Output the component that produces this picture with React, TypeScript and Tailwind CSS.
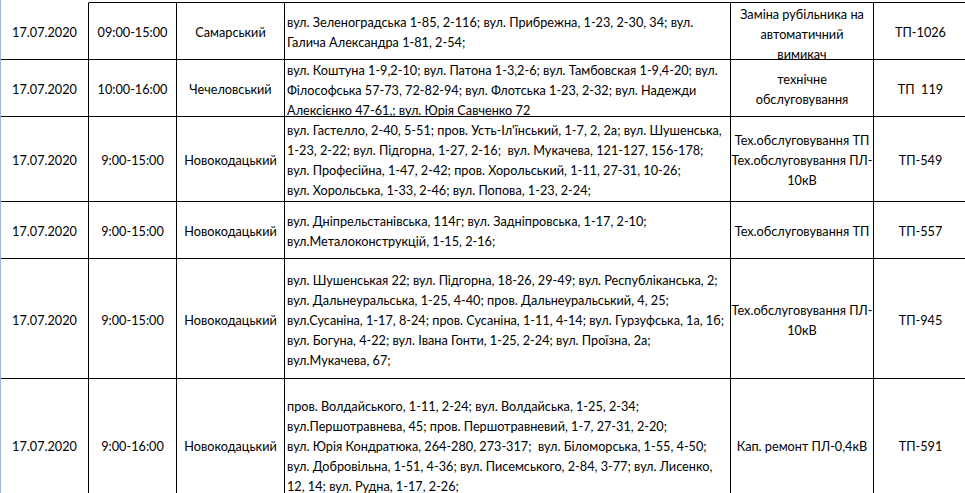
const rows = [
  {
    h: "h-[58px]",
    top: true,
    date: "17.07.2020",
    time: "09:00-15:00",
    district: "Самарський",
    addr: [
      "вул. Зеленоградська 1-85, 2-116; вул. Прибрежна, 1-23, 2-30, 34; вул.",
      "Галича Александра 1-81, 2-54;",
    ],
    work: ["Заміна рубільника на", "автоматичний", "вимикач"],
    workTop: true,
    tp: "ТП-1026",
  },
  {
    h: "h-[57px]",
    date: "17.07.2020",
    time: "10:00-16:00",
    district: "Чечеловський",
    addr: [
      "вул. Коштуна 1-9,2-10; вул. Патона 1-3,2-6; вул. Тамбовская 1-9,4-20; вул.",
      "Філософська 57-73, 72-82-94; вул. Флотська 1-23, 2-32; вул. Надежди",
      "Алексієнко 47-61,; вул. Юрія Савченко 72",
    ],
    addrTop: true,
    work: ["технічне", "обслуговування"],
    tp: "ТП  119",
  },
  {
    h: "h-[85px]",
    date: "17.07.2020",
    time: "9:00-15:00",
    district: "Новокодацький",
    addr: [
      "вул. Гастелло, 2-40, 5-51; пров. Усть-Іл'їнський, 1-7, 2, 2а; вул. Шушенська,",
      "1-23, 2-22; вул. Підгорна, 1-27, 2-16;  вул. Мукачева, 121-127, 156-178;",
      "вул. Професійна, 1-47, 2-42; пров. Хорольський, 1-11, 27-31, 10-26;",
      "вул. Хорольська, 1-33, 2-46; вул. Попова, 1-23, 2-24;",
    ],
    work: ["Тех.обслуговування ТП", "Тех.обслуговування ПЛ-", "10кВ"],
    tp: "ТП-549",
  },
  {
    h: "h-[57px]",
    date: "17.07.2020",
    time: "9:00-15:00",
    district: "Новокодацький",
    addr: [
      "вул. Дніпрельстанівська, 114г; вул. Задніпровська, 1-17, 2-10;",
      "вул.Металоконструкцій, 1-15, 2-16;",
    ],
    work: ["Тех.обслуговування ТП"],
    tp: "ТП-557",
  },
  {
    h: "h-[120px]",
    date: "17.07.2020",
    time: "9:00-15:00",
    district: "Новокодацький",
    addr: [
      "вул. Шушенськая 22; вул. Підгорна, 18-26, 29-49; вул. Республіканська, 2;",
      "вул. Дальнеуральська, 1-25, 4-40; пров. Дальнеуральський, 4, 25;",
      "вул.Сусаніна, 1-17, 8-24; пров. Сусаніна, 1-11, 4-14; вул. Гурзуфська, 1а, 1б;",
      "вул. Богуна, 4-22; вул. Івана Гонти, 1-25, 2-24; вул. Проїзна, 2а;",
      "вул.Мукачева, 67;",
    ],
    work: ["Тех.обслуговування ПЛ-", "10кВ"],
    tp: "ТП-945",
  },
  {
    h: "h-[133px]",
    date: "17.07.2020",
    time: "9:00-16:00",
    district: "Новокодацький",
    addr: [
      "пров. Волдайського, 1-11, 2-24; вул. Волдайська, 1-25, 2-34;",
      "вул.Першотравнева, 45; пров. Першотравневий, 1-7, 27-31, 2-20;",
      "вул. Юрія Кондратюка, 264-280, 273-317;  вул. Біломорська, 1-55, 4-50;",
      "вул. Добровільна, 1-51, 4-36; вул. Писемського, 2-84, 3-77; вул. Лисенко,",
      "12, 14; вул. Рудна, 1-17, 2-26;",
    ],
    work: ["Кап. ремонт ПЛ-0,4кВ"],
    tp: "ТП-591",
  },
];

function Cell({
  w,
  top,
  noTop,
  align = "center",
  valign = "center",
  children,
}: {
  w: string;
  top?: boolean;
  noTop?: boolean;
  align?: "center" | "left";
  valign?: "center" | "top";
  children: React.ReactNode;
}) {
  return (
    <div
      className={[
        w,
        "shrink-0 h-full flex flex-col overflow-hidden border-r border-b border-black",
        top ? (noTop ? "border-t border-t-transparent" : "border-t") : "",
        valign === "top" ? "justify-start" : "justify-center pt-[2px]",
        align === "left" ? "items-start pl-[2px]" : "items-center text-center",
      ].join(" ")}
    >
      {children}
    </div>
  );
}

export default function App() {
  return (
    <div
      className="w-[965px] h-[493px] overflow-hidden bg-white text-black text-[12.7px] leading-[20px] border-l border-[#9db4d8] pt-[2px]"
      style={{ fontFamily: "Lato, 'Liberation Sans', sans-serif" }}
    >
      {rows.map((r, i) => (
        <div key={i} className={`flex ${r.h}`}>
          <Cell w="w-[88px]" top={r.top} noTop>
            {r.date}
          </Cell>
          <Cell w="w-[88px]" top={r.top}>
            {r.time}
          </Cell>
          <Cell w="w-[108px]" top={r.top}>
            <span className="whitespace-nowrap">{r.district}</span>
          </Cell>
          <Cell w="w-[446px]" top={r.top} align="left" valign={r.addrTop ? "top" : "center"}>
            {r.addr.map((l, j) => (
              <div key={j} className="whitespace-pre shrink-0">
                {l}
              </div>
            ))}
          </Cell>
          <Cell w="w-[143px]" top={r.top} valign={r.workTop ? "top" : "center"}>
            {r.work.map((l, j) => (
              <div key={j} className={`whitespace-pre shrink-0 ${r.workTop && j === 0 ? "mt-[1px]" : ""}`}>
                {l}
              </div>
            ))}
          </Cell>
          <Cell w="w-[94px]" top={r.top}>
            <span className="whitespace-pre">{r.tp}</span>
          </Cell>
        </div>
      ))}
    </div>
  );
}
